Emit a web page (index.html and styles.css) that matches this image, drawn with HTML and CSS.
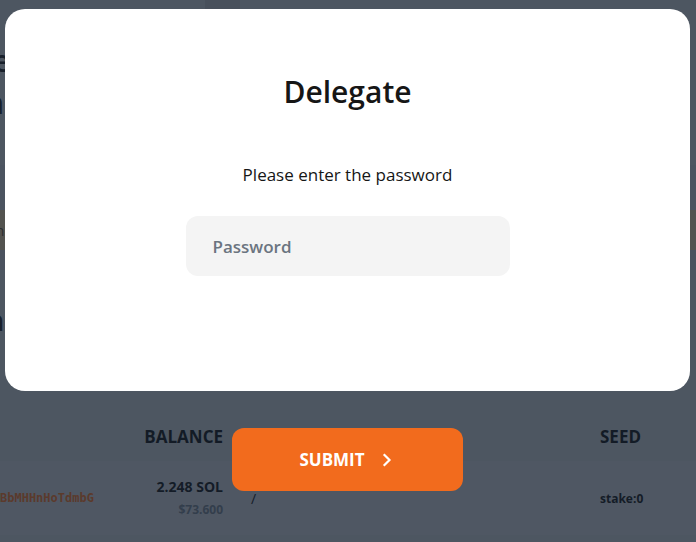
FILE: index.html
```html
<!DOCTYPE html>
<html lang="en">
<head>
<meta charset="utf-8">
<title>Delegate</title>
<link rel="stylesheet" href="styles.css">
</head>
<body>
<div class="page">
  <div class="topbar"><span class="tab"></span></div>
  <div class="hero">
    <div class="hero-line">Stake</div>
    <div class="hero-line">Menu</div>
  </div>
  <div class="band band-a"></div>
  <div class="band band-b"><span class="small-edge">an</span></div>
  <div class="band band-c"></div>
  <div class="sub-title">Stakin</div>
  <div class="table">
    <div class="thead">
      <div class="c-addr"></div>
      <div class="c-bal">BALANCE</div>
      <div class="c-mid"></div>
      <div class="c-seed">SEED</div>
    </div>
    <div class="trow">
      <div class="c-addr addr">BbMHHnHoTdmbG</div>
      <div class="c-bal">
        <div class="sol">2.248 SOL</div>
        <div class="usd">$73.600</div>
      </div>
      <div class="c-mid slash">/</div>
      <div class="c-seed seed">stake:0</div>
    </div>
    <div class="tfoot"></div>
  </div>
</div>

<div class="overlay">
  <div class="modal">
    <h1 class="title">Delegate</h1>
    <p class="prompt">Please enter the password</p>
    <input class="field" type="password" placeholder="Password">
  </div>
  <button class="submit" type="button">
    <span>SUBMIT</span>
    <svg class="chev" width="10" height="14" viewBox="0 0 10 14" aria-hidden="true">
      <path d="M2.5 2 L7.5 7 L2.5 12" fill="none" stroke="#fff" stroke-width="2.2" stroke-linecap="square"/>
    </svg>
  </button>
</div>
</body>
</html>
```

FILE: styles.css
```css
* { box-sizing: border-box; }
html, body { margin: 0; padding: 0; }
body {
  width: 696px;
  height: 542px;
  overflow: hidden;
  background: #4d5661;
  font-family: "Open Sans", "Noto Sans", sans-serif;
  color: #18202b;
}

.page { display: flex; flex-direction: column; height: 542px; overflow: hidden; }
.page > * { flex-shrink: 0; }
.topbar { height: 9px; display: flex; }
.tab { width: 35px; margin-left: 205px; background: #48505b; }
.hero { height: 156px; padding-top: 34px; display: flex; flex-direction: column; gap: 6px; }
.hero-line { font-size: 30px; font-weight: 600; line-height: 36px; color: #18202b; margin-left: -70px; }
.hero-line + .hero-line { margin-left: -60px; }
.band { height: 45px; }
.band-a { background: #4b5460; }
.band-b { height: 40px; background: #53534f; display: flex; align-items: center; }
.small-edge { font-size: 14px; margin-left: -12px; color: #2a2d30; }
.band-c { height: 20px; background: #4a525e; }
.sub-title { font-size: 28px; font-weight: 600; line-height: 36px; margin-top: 32px; margin-left: -80px; color: #18202b; }

.table { margin-top: 74px; }
.thead, .trow { display: flex; align-items: center; }
.thead { height: 49px; }
.trow { height: 74px; background: #4f5763; }
.tfoot { height: 20px; background: #4d5661; }
.c-addr { width: 130px; }
.c-bal { width: 93px; text-align: right; padding-top: 2px; }
.c-mid { width: 377px; padding-left: 28px; }
.c-seed { width: 96px; }
.thead .c-bal { padding-top: 0; }
.thead .c-bal, .thead .c-seed { font-size: 17px; font-weight: 700; color: #131b26; }
.addr { font-family: "DejaVu Sans Mono", monospace; font-size: 12px; font-weight: 700; color: #5b3a2c; }
.sol { font-size: 14px; font-weight: 700; color: #141c27; line-height: 18px; }
.usd { font-size: 12px; font-weight: 700; color: #333e4c; line-height: 20px; margin-top: 4px; }
.slash { font-size: 14px; color: #141c27; }
.seed { font-size: 12px; font-weight: 700; color: #141c27; }

.overlay {
  position: fixed;
  inset: 0;
  display: flex;
  flex-direction: column;
  align-items: center;
}
.modal {
  width: 685px;
  height: 382px;
  margin: 9px 1px 0 0;
  background: #ffffff;
  border-radius: 20px;
  display: flex;
  flex-direction: column;
  align-items: center;
  padding-top: 65px;
}
.title {
  margin: 0;
  font-size: 30px;
  font-weight: 600;
  line-height: 36px;
  color: #161616;
}
.prompt {
  margin: 53px 0 0;
  font-size: 17px;
  line-height: 24px;
  color: #161616;
}
.field {
  margin-top: 29px;
  width: 324px;
  height: 60px;
  border: none;
  border-radius: 12px;
  background: #f4f4f4;
  padding: 0 27px;
  font-family: "Open Sans", "Noto Sans", sans-serif;
  font-size: 17px;
  font-weight: 600;
  color: #161616;
  outline: none;
}
.field::placeholder { color: #6b7480; opacity: 1; }

.submit {
  margin: 37px 1px 0 0;
  width: 231px;
  height: 63px;
  border: none;
  border-radius: 12px;
  background: #f26b1d;
  color: #ffffff;
  font-family: "Open Sans", "Noto Sans", sans-serif;
  font-size: 17px;
  font-weight: 700;
  display: flex;
  align-items: center;
  justify-content: center;
  gap: 17px;
  padding: 0 4px 0 0;
}
.chev { display: block; }
```
